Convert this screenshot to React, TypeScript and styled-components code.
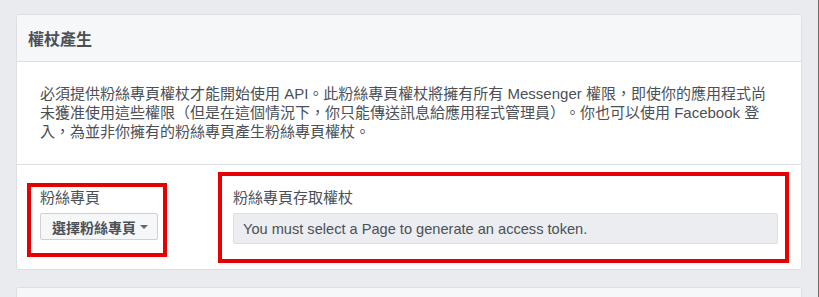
import styled, { createGlobalStyle } from "styled-components";

const GlobalStyle = createGlobalStyle`
  html, body {
    margin: 0;
    padding: 0;
    background: #e9ebee;
  }
  body {
    font-family: "Liberation Sans", "Noto Sans CJK TC", sans-serif;
    color: #4b4f56;
    text-spacing-trim: space-all;
  }
`;

const Page = styled.div`
  box-sizing: border-box;
  width: 819px;
  height: 297px;
  overflow: hidden;
  padding: 14px 16px 0 16px;
  border-right: 1px solid #6b6b6b;
  display: flex;
  flex-direction: column;
  gap: 17px;
`;

const Card = styled.section`
  background: #fff;
  border: 1px solid #dddfe2;
  border-radius: 3px;
  flex-shrink: 0;
`;

const CardHeader = styled.header`
  height: 46px;
  padding: 0 11px;
  display: flex;
  align-items: center;
  background: #f6f7f9;
  border-bottom: 1px solid #dddfe2;
  border-radius: 3px 3px 0 0;
  font-size: 16px;
  font-weight: bold;
  color: #4b4f56;
`;

const Section = styled.div<{ $divider?: boolean }>`
  padding: 23px;
  border-bottom: ${({ $divider }) => ($divider ? "1px solid #dddfe2" : "none")};
`;

const Description = styled.p`
  margin: 0;
  white-space: nowrap;
  font-size: 15px;
  line-height: 18.75px;
  color: #4b4f56;
`;

const FieldRow = styled.div`
  display: flex;
  align-items: flex-start;
  padding: 24px 23px 25px 23px;
`;

const Field = styled.div<{ $width?: number }>`
  position: relative;
  display: flex;
  flex-direction: column;
  align-items: flex-start;
  gap: 6px;
  flex: ${({ $width }) => ($width ? `0 0 ${$width}px` : "1 1 auto")};
`;

const Label = styled.label`
  font-size: 15px;
  line-height: 18px;
  color: #4b4f56;
`;

const SelectButton = styled.button`
  box-sizing: border-box;
  width: 118px;
  height: 27px;
  padding: 0 9px 0 11px;
  display: inline-flex;
  align-items: center;
  justify-content: space-between;
  background: #f6f7f9;
  border: 1px solid #ced0d4;
  border-radius: 2px;
  font-family: inherit;
  font-size: 14px;
  font-weight: bold;
  color: #4b4f56;
`;

const Caret = styled.span`
  width: 0;
  height: 0;
  border-left: 4px solid transparent;
  border-right: 4px solid transparent;
  border-top: 4px solid #606770;
`;

const TokenBox = styled.div`
  box-sizing: border-box;
  width: 100%;
  height: 31px;
  padding: 0 9px;
  display: flex;
  align-items: center;
  background: #ebedf0;
  border: 1px solid #dddfe2;
  border-radius: 2px;
  font-size: 14.6px;
  color: #4b4f56;
`;

const Highlight = styled.span<{ $top: number; $left: number; $right: number; $bottom: number }>`
  position: absolute;
  top: ${({ $top }) => $top}px;
  left: ${({ $left }) => $left}px;
  right: ${({ $right }) => $right}px;
  bottom: ${({ $bottom }) => $bottom}px;
  border: 4px solid #e60000;
  pointer-events: none;
`;

export default function App() {
  return (
    <>
      <GlobalStyle />
      <Page>
        <Card>
          <CardHeader>權杖產生</CardHeader>
          <Section $divider>
            <Description>
              必須提供粉絲專頁權杖才能開始使用 API。此粉絲專頁權杖將擁有所有 Messenger 權限，即使你的應用程式尚
              <br />
              未獲准使用這些權限（但是在這個情況下，你只能傳送訊息給應用程式管理員）。你也可以使用 Facebook 登
              <br />
              入，為並非你擁有的粉絲專頁產生粉絲專頁權杖。
            </Description>
          </Section>
          <FieldRow>
            <Field $width={193}>
              <Label>粉絲專頁</Label>
              <SelectButton>
                選擇粉絲專頁
                <Caret />
              </SelectButton>
              <Highlight $top={-6} $left={-13} $right={66} $bottom={-17} />
            </Field>
            <Field>
              <Label>粉絲專頁存取權杖</Label>
              <TokenBox>You must select a Page to generate an access token.</TokenBox>
              <Highlight $top={-17} $left={-15} $right={-11} $bottom={-19} />
            </Field>
          </FieldRow>
        </Card>
        <Card>
          <CardHeader />
        </Card>
      </Page>
    </>
  );
}
